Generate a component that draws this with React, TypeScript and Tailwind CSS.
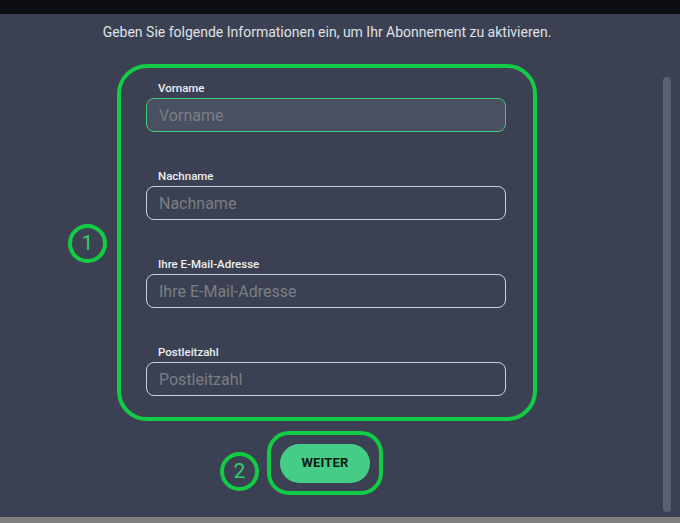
const fields = ["Vorname", "Nachname", "Ihre E-Mail-Adresse", "Postleitzahl"];

const Marker = ({ n, className }: { n: string; className: string }) => (
  <div
    className={`absolute w-[39px] h-[39px] rounded-full border-4 border-[#12cc45] flex items-center justify-center text-[#2fd063] text-[21px] font-normal leading-none ${className}`}
  >
    {n}
  </div>
);

export default function App() {
  return (
    <div className="w-[680px] h-[523px] flex flex-col bg-[#3b4152] font-['Roboto',sans-serif] overflow-hidden">
      <div className="h-[14px] bg-[#0d0e12] shrink-0" />
      <div className="flex-1 flex">
        <div className="w-[652px] flex flex-col items-center pt-[9px]">
          <p className="text-[14px] leading-[18px] text-[#dfe1e6] pl-[2px]">
            Geben Sie folgende Informationen ein, um Ihr Abonnement zu aktivieren.
          </p>

          <div className="relative mt-[23px] ml-[2px] w-[420px] h-[357px] border-4 border-[#12cc45] rounded-[30px] pt-[13px] pl-[25px]">
            <Marker n="1" className="left-[-53px] top-[156px]" />
            {fields.map((f, i) => (
              <div key={f} className={i === 0 ? "" : "mt-[37px]"}>
                <label className="block ml-3 mb-[3px] text-[11.5px] leading-[14px] font-medium text-[#eceef2]">
                  {f}
                </label>
                <input
                  placeholder={f}
                  className={`w-[360px] h-[34px] rounded-lg px-3 text-[16px] text-white placeholder:text-[#7b7e85] outline-none ${
                    i === 0
                      ? "bg-[#4a5061] border border-[#3fcf7c]"
                      : "bg-transparent border border-[#cfd1d6]"
                  }`}
                />
              </div>
            ))}
          </div>

          <div className="relative mt-[10px] mr-[2px] w-[116px] h-[64px] border-4 border-[#12cc45] rounded-[22px] flex items-center justify-center">
            <Marker n="2" className="left-[-51px] top-[17px]" />
            <button className="w-[90px] h-[39px] rounded-full bg-[#45cc86] text-[13px] font-bold text-[#0b1a12] tracking-[0.2px]">
              WEITER
            </button>
          </div>
        </div>
        <div className="flex-1 flex justify-center pt-[63px] pb-[5px] pl-[2px]">
          <div className="w-[8px] h-[435px] rounded-full bg-[#596072]" />
        </div>
      </div>
      <div className="h-[6px] bg-[#7f7f7f] shrink-0" />
    </div>
  );
}
